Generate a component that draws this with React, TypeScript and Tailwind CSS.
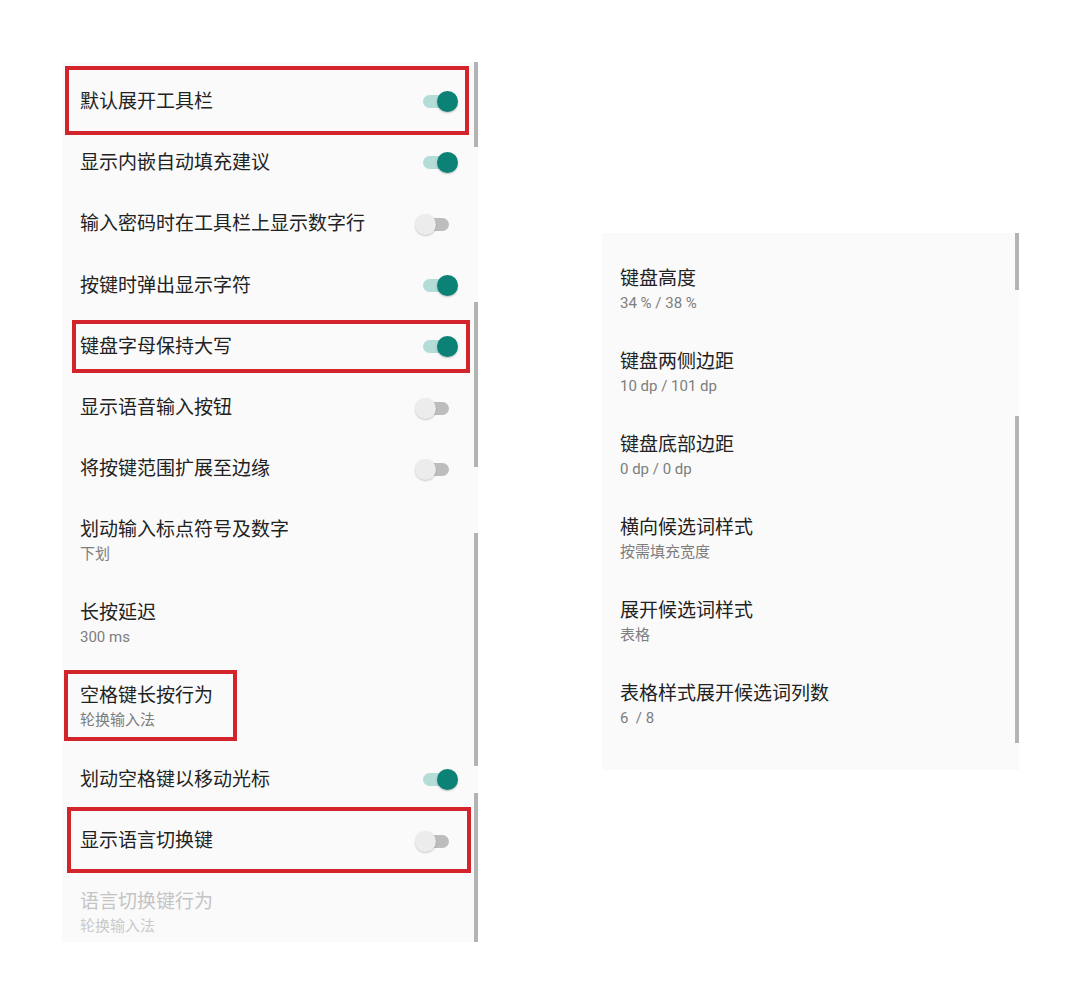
import React from 'react';

type Row = {
  title: string;
  sub?: string;
  toggle?: 'on' | 'off';
  disabled?: boolean;
};

const leftRows: Row[] = [
  { title: '默认展开工具栏', toggle: 'on' },
  { title: '显示内嵌自动填充建议', toggle: 'on' },
  { title: '输入密码时在工具栏上显示数字行', toggle: 'off' },
  { title: '按键时弹出显示字符', toggle: 'on' },
  { title: '键盘字母保持大写', toggle: 'on' },
  { title: '显示语音输入按钮', toggle: 'off' },
  { title: '将按键范围扩展至边缘', toggle: 'off' },
  { title: '划动输入标点符号及数字', sub: '下划' },
  { title: '长按延迟', sub: '300 ms' },
  { title: '空格键长按行为', sub: '轮换输入法' },
  { title: '划动空格键以移动光标', toggle: 'on' },
  { title: '显示语言切换键', toggle: 'off' },
  { title: '语言切换键行为', sub: '轮换输入法', disabled: true },
];

const rightRows: Row[] = [
  { title: '键盘高度', sub: '34 % / 38 %' },
  { title: '键盘两侧边距', sub: '10 dp / 101 dp' },
  { title: '键盘底部边距', sub: '0 dp / 0 dp' },
  { title: '横向候选词样式', sub: '按需填充宽度' },
  { title: '展开候选词样式', sub: '表格' },
  { title: '表格样式展开候选词列数', sub: '6  / 8' },
];

// android-style switch, thumb sits on the track end
const Toggle: React.FC<{ on: boolean }> = ({ on }) =>
  on ? (
    <div className="relative w-[36px] h-[21px] flex items-center">
      <div className="absolute left-[1px] w-[30px] h-[13px] rounded-full bg-[#b4ddd7]" />
      <div className="absolute right-0 w-[21px] h-[21px] rounded-full bg-[#0b8275] shadow-[0_1px_2px_rgba(0,0,0,0.25)]" />
    </div>
  ) : (
    <div className="relative w-[36px] h-[21px] flex items-center">
      <div className="absolute left-[-2px] w-[29px] h-[13px] rounded-full bg-[#bdbdbd]" />
      <div className="absolute left-[-7px] w-[21px] h-[21px] rounded-full bg-[#ececec] shadow-[0_1px_2px_rgba(0,0,0,0.2)]" />
    </div>
  );

const SettingRow: React.FC<{ row: Row }> = ({ row }) => {
  const titleColor = row.disabled ? 'text-[#c4c4c4]' : 'text-[#222222]';
  const subColor = row.disabled ? 'text-[#cacaca]' : 'text-[#7d7d7d]';
  if (row.sub) {
    return (
      <div className="h-[83px] pt-[19px] pl-[18px] pr-[30px]">
        <div className={`text-[19px] leading-[22px] ${titleColor}`}>{row.title}</div>
        <div className={`mt-[3px] text-[15px] leading-[20px] whitespace-pre ${subColor}`}>{row.sub}</div>
      </div>
    );
  }
  return (
    <div className="h-[61.3px] pl-[18px] pr-[20px] flex items-center justify-between">
      <div className={`text-[19px] leading-[22px] ${titleColor}`}>{row.title}</div>
      {row.toggle && <Toggle on={row.toggle === 'on'} />}
    </div>
  );
};

const Scroll: React.FC<{ top: number; height: number }> = ({ top, height }) => (
  <div className="absolute right-0 w-[4px] bg-[#b3b3b3]" style={{ top, height }} />
);

const Mark: React.FC<{ x: number; y: number; w: number; h: number }> = ({ x, y, w, h }) => (
  <div className="absolute border-[4px] border-[#d3242c]" style={{ left: x, top: y, width: w, height: h }} />
);

export default function App() {
  return (
    <div
      className="relative w-[1080px] h-[1003px] bg-white flex items-start pl-[62px] pt-[62px] gap-[124px]"
      style={{ fontFamily: 'Roboto, "Noto Sans CJK SC", sans-serif' }}
    >
      <div className="relative w-[416px] h-[880px] bg-[#fafafa] overflow-hidden pt-[9px]">
        {leftRows.map(r => (
          <SettingRow key={r.title} row={r} />
        ))}
        <Scroll top={0} height={85} />
        <Scroll top={240} height={165} />
        <Scroll top={471} height={233} />
        <Scroll top={731} height={149} />
      </div>

      <div className="relative mt-[171px] w-[417px] h-[537px] bg-[#fafafa] pt-[16px]">
        {rightRows.map(r => (
          <SettingRow key={r.title} row={r} />
        ))}
        <Scroll top={0} height={57} />
        <Scroll top={183} height={327} />
      </div>

      {/* annotation boxes */}
      <Mark x={65} y={66} w={404} h={69} />
      <Mark x={72} y={320} w={398} h={53} />
      <Mark x={64} y={670} w={173} h={71} />
      <Mark x={67} y={807} w={404} h={66} />
    </div>
  );
}
